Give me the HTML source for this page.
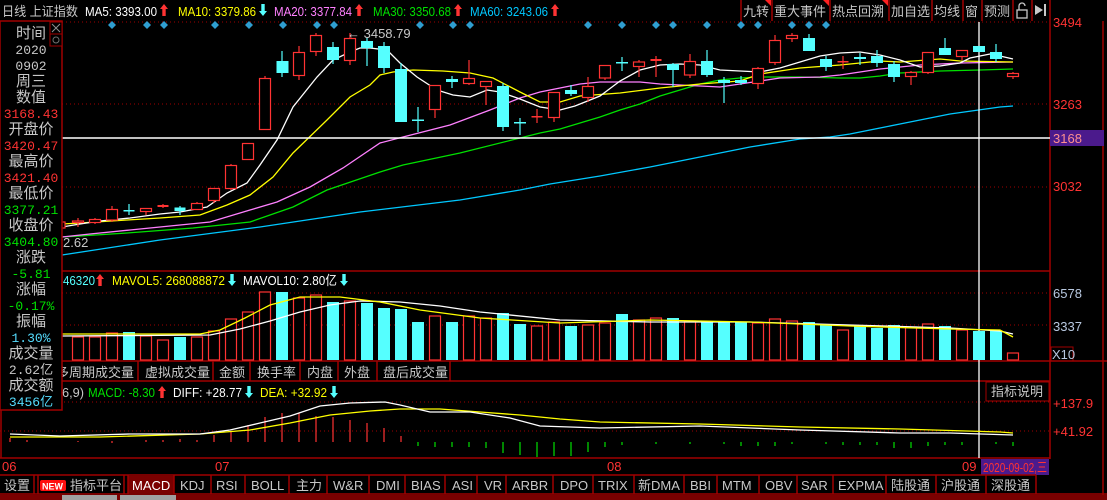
<!DOCTYPE html>
<html><head><meta charset="utf-8"><style>
html,body{margin:0;padding:0;background:#000;}
body{width:1107px;height:500px;overflow:hidden;position:relative;}
svg{position:absolute;left:0;top:0;}
text{font-family:"Liberation Sans","Noto Sans CJK SC",sans-serif;}
.mono{font-family:"Liberation Mono","Noto Sans CJK SC",monospace;}
.r{fill:#000;stroke:#ff3333;stroke-width:1.2}
.rw{stroke:#ff3333;stroke-width:1.2}
.c{fill:#55ffff}
.cw{stroke:#55ffff;stroke-width:1.2}
.dot{stroke:#a00000;stroke-dasharray:1 3;stroke-width:1}
.bd{stroke:#a00000;stroke-width:1.5;fill:none}
.tab{fill:#c8c8c8;font-size:13px}
</style></head><body>
<svg width="1107" height="500" viewBox="0 0 1107 500" xmlns="http://www.w3.org/2000/svg">
<defs>
<path id="au" d="M0 -6 l4 5 h-2.3 v7 h-3.4 v-7 h-2.3z"/>
<path id="ad" d="M0 6 l4 -5 h-2.3 v-7 h-3.4 v7 h-2.3z"/>
</defs>
<!-- top bar -->
<text x="2" y="16" fill="#c8c8c8" font-size="13" textLength="76" lengthAdjust="spacingAndGlyphs">日线 上证指数</text>
<text x="85" y="16" fill="#ffffff" font-size="13" textLength="72" lengthAdjust="spacingAndGlyphs">MA5: 3393.00</text><use href="#au" x="164" y="10" fill="#ff3333"/>
<text x="178" y="16" fill="#ffff00" font-size="13" textLength="78" lengthAdjust="spacingAndGlyphs">MA10: 3379.86</text><use href="#ad" x="263" y="10" fill="#55ffff"/>
<text x="274" y="16" fill="#ff80ff" font-size="13" textLength="78" lengthAdjust="spacingAndGlyphs">MA20: 3377.84</text><use href="#au" x="359" y="10" fill="#ff3333"/>
<text x="373" y="16" fill="#00e000" font-size="13" textLength="78" lengthAdjust="spacingAndGlyphs">MA30: 3350.68</text><use href="#au" x="458" y="10" fill="#ff3333"/>
<text x="470" y="16" fill="#00c8ff" font-size="13" textLength="78" lengthAdjust="spacingAndGlyphs">MA60: 3243.06</text><use href="#au" x="555" y="10" fill="#ff3333"/>
<!-- right buttons -->
<g class="bd"><line x1="741" y1="0" x2="741" y2="21"/><line x1="772" y1="0" x2="772" y2="21"/><line x1="830" y1="0" x2="830" y2="21"/><line x1="889" y1="0" x2="889" y2="21"/><line x1="932" y1="0" x2="932" y2="21"/><line x1="963" y1="0" x2="963" y2="21"/><line x1="982" y1="0" x2="982" y2="21"/><line x1="1013" y1="0" x2="1013" y2="21"/><line x1="1032" y1="0" x2="1032" y2="21"/><line x1="1050" y1="0" x2="1050" y2="21"/></g>
<g fill="#c8c8c8" font-size="13"><text x="743" y="16">九转</text><text x="774" y="16">重大事件</text><text x="832" y="16">热点回溯</text><text x="891" y="16">加自选</text><text x="934" y="16">均线</text><text x="965" y="16">窗</text><text x="984" y="16">预测</text></g>
<g fill="#ff2020"><polygon points="765,0 771,0 771,6"/><polygon points="823,0 829,0 829,6"/><polygon points="882,0 888,0 888,6"/></g>
<rect x="1017" y="10" width="10" height="8" fill="none" stroke="#c8c8c8" stroke-width="1.3"/><path d="M1019 10 V6 a3 3 0 0 1 6 0" fill="none" stroke="#c8c8c8" stroke-width="1.3"/>
<polygon points="1035,5 1043,10 1035,15" fill="#c8c8c8"/><rect x="1035" y="9" width="4" height="2" fill="#c8c8c8"/><rect x="1044" y="4" width="2" height="12" fill="#c8c8c8"/>
<!-- grid -->
<line x1="62" y1="22" x2="1050" y2="22" class="dot"/>
<line x1="62" y1="104" x2="1050" y2="104" class="dot"/>
<line x1="62" y1="187" x2="1050" y2="187" class="dot"/>
<line x1="62" y1="293" x2="1050" y2="293" class="dot"/>
<line x1="62" y1="325" x2="1050" y2="325" class="dot"/>
<line x1="0" y1="402" x2="1050" y2="402" class="dot"/>
<line x1="0" y1="431" x2="1050" y2="431" class="dot"/>
<g class="bd">
<line x1="1050" y1="21" x2="1050" y2="459"/><line x1="1103" y1="21" x2="1103" y2="500"/>
<line x1="0" y1="271" x2="1050" y2="271"/>
<line x1="62" y1="361" x2="1107" y2="361"/>
<line x1="0" y1="381" x2="1050" y2="381"/>
<line x1="0" y1="458" x2="1050" y2="458"/>
<line x1="1" y1="381" x2="1" y2="458"/>
</g>
<!-- diamonds -->
<g fill="#2f9ed0">
<path d="M112 21l4 4-4 4-4-4z"/><path d="M147 21l4 4-4 4-4-4z"/><path d="M164 21l4 4-4 4-4-4z"/><path d="M215 21l4 4-4 4-4-4z"/><path d="M249 21l4 4-4 4-4-4z"/><path d="M283 21l4 4-4 4-4-4z"/><path d="M317 21l4 4-4 4-4-4z"/><path d="M334 21l4 4-4 4-4-4z"/><path d="M420 21l4 4-4 4-4-4z"/><path d="M453 21l4 4-4 4-4-4z"/><path d="M470 21l4 4-4 4-4-4z"/>
<path d="M588 21l4 4-4 4-4-4z"/><path d="M622 21l4 4-4 4-4-4z"/><path d="M656 21l4 4-4 4-4-4z"/><path d="M673 21l4 4-4 4-4-4z"/><path d="M707 21l4 4-4 4-4-4z"/><path d="M741 21l4 4-4 4-4-4z"/><path d="M758 21l4 4-4 4-4-4z"/><path d="M792 21l4 4-4 4-4-4z"/><path d="M809 21l4 4-4 4-4-4z"/><path d="M826 21l4 4-4 4-4-4z"/>
</g>
<!-- MA lines -->
<g fill="none" stroke-width="1.3">
<polyline stroke="#00c8ff" points="62,255 160,240 260,227 360,212 460,200 520,190 550,184 600,176 650,167 700,157 750,147 800,139 830,137 850,134 900,124 950,114 1000,107 1013,106"/>
<polyline stroke="#00e000" points="62,237 80,236 127,233 193,228 250,222 293,207 327,190 380,172 403,165 460,153 520,138 540,133 560,129 580,123 600,117 620,110 640,104 660,96 680,90 700,84 720,80 740,78 760,77 800,77 840,78 860,78 880,76 900,73 940,71 980,70 1013,69"/>
<polyline stroke="#ff80ff" points="62,237 90,234 130,230 170,226 210,222 250,210 277,202 310,187 343,168 380,143 403,137 450,125 490,110 520,98 540,92 560,88 580,84 600,82 640,82 660,84 700,86 720,87 740,84 760,81 780,78 820,77 840,75 860,72 880,69 900,67 920,65 960,63 1013,62"/>
<polyline stroke="#ffff00" points="62,224 80,223 127,220 160,218 200,215 227,205 250,195 273,177 293,153 327,120 350,97 370,85 380,75 393,72 413,70 443,71 470,73 493,78 520,92 540,102 560,102 580,96 620,93 660,88 700,84 740,81 760,74 780,71 800,68 840,65 880,61 900,62 940,59 960,61 1013,62"/>
<polyline stroke="#ffffff" points="62,227 80,224 100,221 130,218 160,214 180,212 207,207 227,193 247,183 260,165 277,140 293,107 317,77 333,60 350,52 360,48 370,48 387,50 400,63 417,77 437,90 453,95 470,97 487,90 500,92 520,99 540,107 560,110 575,106 600,96 620,81 640,70 660,65 680,64 700,65 720,70 760,72 780,68 800,62 820,56 840,53 860,52 880,55 900,60 920,67 940,66 960,63 970,58 990,54 1000,56 1013,59"/>
</g>
<line x1="62" y1="138" x2="1050" y2="138" stroke="#ffffff" stroke-width="1.5"/>
<line x1="979" y1="22" x2="979" y2="458" stroke="#ffffff" stroke-width="1.3"/>
<!-- candles -->
<g>
<line class="rw" x1="61" y1="219" x2="61" y2="230"/><rect class="r" x="57" y="222" width="8" height="6"/>
<line class="rw" x1="78" y1="218" x2="78" y2="227"/><rect class="r" x="72.5" y="221" width="11" height="1.5"/>
<line class="rw" x1="95" y1="218" x2="95" y2="224"/><rect class="r" x="89.5" y="219.5" width="11" height="3"/>
<line class="rw" x1="112" y1="206" x2="112" y2="222"/><rect class="r" x="106.5" y="209.5" width="11" height="10.5"/>
<line class="cw" x1="129" y1="204" x2="129" y2="215"/><rect class="c" x="123.5" y="210" width="11" height="1.5"/>
<line class="rw" x1="146" y1="208" x2="146" y2="215"/><rect class="r" x="140.5" y="208.5" width="11" height="3"/>
<line class="rw" x1="163" y1="204" x2="163" y2="208"/><rect x="157.5" y="205" width="11" height="2" fill="#ff3333"/>
<line class="cw" x1="180" y1="206" x2="180" y2="215"/><rect class="c" x="174.5" y="207.5" width="11" height="3.5"/>
<line class="rw" x1="197" y1="202" x2="197" y2="210"/><rect class="r" x="191.5" y="203.5" width="11" height="6"/>
<line class="rw" x1="214" y1="188" x2="214" y2="203"/><rect class="r" x="208.5" y="188.5" width="11" height="12"/>
<line class="rw" x1="231" y1="164" x2="231" y2="190"/><rect class="r" x="225.5" y="165.5" width="11" height="23"/>
<rect class="r" x="242.5" y="143.5" width="11" height="16"/>
<line class="rw" x1="265" y1="76" x2="265" y2="130"/><rect class="r" x="259.5" y="78.5" width="11" height="51"/>
<line class="cw" x1="282" y1="51" x2="282" y2="77"/><rect class="c" x="276.5" y="61" width="12" height="12"/>
<line class="rw" x1="299" y1="46" x2="299" y2="80"/><rect class="r" x="293.5" y="52.5" width="11" height="23"/>
<line class="rw" x1="316" y1="33" x2="316" y2="56"/><rect class="r" x="310.5" y="35.5" width="11" height="16"/>
<line class="cw" x1="333" y1="42" x2="333" y2="64"/><rect class="c" x="327" y="47" width="12" height="13"/>
<line class="rw" x1="350" y1="33" x2="350" y2="65"/><rect class="r" x="344.5" y="38.5" width="11" height="22"/>
<line class="cw" x1="367" y1="38" x2="367" y2="66"/><rect class="c" x="361" y="41" width="12" height="7"/>
<line class="cw" x1="384" y1="42" x2="384" y2="73"/><rect class="c" x="378" y="46" width="12" height="22"/>
<line class="cw" x1="401" y1="63" x2="401" y2="122"/><rect class="c" x="395" y="69" width="12" height="53"/>
<line class="cw" x1="418" y1="107" x2="418" y2="132"/><rect class="c" x="412" y="119.5" width="12" height="1.5"/>
<line class="rw" x1="435" y1="85" x2="435" y2="118"/><rect class="r" x="429.5" y="85.5" width="11" height="24"/>
<line class="cw" x1="452" y1="76" x2="452" y2="88"/><rect class="c" x="446" y="79" width="12" height="3"/>
<line class="rw" x1="469" y1="60" x2="469" y2="85"/><rect class="r" x="463.5" y="78.5" width="11" height="5"/>
<line class="rw" x1="486" y1="81" x2="486" y2="105"/><rect class="r" x="480.5" y="81.5" width="11" height="5"/>
<line class="cw" x1="503" y1="83" x2="503" y2="131"/><rect class="c" x="497" y="86" width="12" height="41"/>
<line class="cw" x1="520" y1="118" x2="520" y2="135"/><rect class="c" x="514" y="122" width="12" height="1.5"/>
<line class="rw" x1="537" y1="109" x2="537" y2="123"/><rect x="531.5" y="116" width="11" height="1.5" fill="#ff3333"/>
<line class="rw" x1="554" y1="92" x2="554" y2="122"/><rect class="r" x="548.5" y="92.5" width="11" height="25"/>
<line class="cw" x1="571" y1="85" x2="571" y2="96"/><rect class="c" x="565" y="90" width="12" height="4"/>
<line class="rw" x1="588" y1="77" x2="588" y2="102"/><rect class="r" x="582.5" y="86.5" width="11" height="11"/>
<line class="rw" x1="605" y1="65" x2="605" y2="80"/><rect class="r" x="599.5" y="65.5" width="11" height="12.5"/>
<line class="cw" x1="622" y1="57" x2="622" y2="71"/><rect class="c" x="616" y="62" width="12" height="1.5"/>
<line class="rw" x1="639" y1="60" x2="639" y2="77"/><rect class="r" x="633.5" y="62" width="11" height="4.5"/>
<line class="rw" x1="656" y1="56" x2="656" y2="77"/><rect x="650.5" y="59" width="11" height="2" fill="#ff3333"/>
<line class="cw" x1="673" y1="63" x2="673" y2="87"/><rect class="c" x="667" y="64" width="12" height="6"/>
<line class="rw" x1="690" y1="54" x2="690" y2="78"/><rect class="r" x="684.5" y="61.5" width="11" height="13.5"/>
<line class="cw" x1="707" y1="50" x2="707" y2="77"/><rect class="c" x="701" y="61" width="12" height="14"/>
<line class="cw" x1="724" y1="77" x2="724" y2="103"/><rect class="c" x="718" y="80" width="12" height="3"/>
<line class="cw" x1="741" y1="76" x2="741" y2="85"/><rect class="c" x="735" y="80" width="12" height="3"/>
<line class="rw" x1="758" y1="67" x2="758" y2="89"/><rect class="r" x="752.5" y="68.5" width="11" height="15"/>
<line class="rw" x1="775" y1="35" x2="775" y2="65"/><rect class="r" x="769.5" y="40.5" width="11" height="22"/>
<line class="rw" x1="792" y1="33" x2="792" y2="42"/><rect class="r" x="786.5" y="35.5" width="11" height="3"/>
<line class="cw" x1="809" y1="34" x2="809" y2="51"/><rect class="c" x="803" y="38" width="12" height="13"/>
<line class="cw" x1="826" y1="56" x2="826" y2="71"/><rect class="c" x="820" y="59" width="12" height="8"/>
<line class="rw" x1="843" y1="56" x2="843" y2="69"/><rect x="837.5" y="61" width="11" height="1.5" fill="#ff3333"/>
<line class="cw" x1="860" y1="53" x2="860" y2="65"/><rect class="c" x="854" y="57" width="12" height="2"/>
<line class="cw" x1="877" y1="50" x2="877" y2="67"/><rect class="c" x="871" y="56" width="12" height="7"/>
<line class="cw" x1="894" y1="61" x2="894" y2="82"/><rect class="c" x="888" y="64" width="12" height="13"/>
<line class="rw" x1="911" y1="71" x2="911" y2="85"/><rect class="r" x="905.5" y="72.5" width="11" height="4"/>
<line class="rw" x1="928" y1="52" x2="928" y2="74"/><rect class="r" x="922.5" y="52.5" width="11" height="20"/>
<line class="cw" x1="945" y1="38" x2="945" y2="55"/><rect class="c" x="939" y="48" width="12" height="7"/>
<line class="rw" x1="962" y1="50" x2="962" y2="60"/><rect class="r" x="956.5" y="50.5" width="11" height="6"/>
<rect class="c" x="973" y="46" width="12" height="6"/>
<line class="cw" x1="996" y1="44" x2="996" y2="62"/><rect class="c" x="990" y="52" width="12" height="7"/>
<line class="rw" x1="1013" y1="72" x2="1013" y2="79"/><rect class="r" x="1007.5" y="73.5" width="11" height="3"/>
</g>
<text x="347" y="38" fill="#c8c8c8" font-size="13">← 3458.79</text>
<text x="63" y="247" fill="#c8c8c8" font-size="13">2.62</text>
<g font-size="13" fill="#ff3333"><text x="1053" y="27">3494</text><text x="1053" y="109">3263</text><text x="1053" y="191">3032</text></g>
<rect x="1050" y="130" width="54" height="16" fill="#4b1a8c"/>
<text x="1053" y="143" fill="#ff9090" font-size="13">3168</text>
<!-- volume -->
<text x="63" y="285" fill="#55ffff" font-size="13" textLength="32" lengthAdjust="spacingAndGlyphs">46320</text><use href="#au" x="100" y="280" fill="#ff3333"/>
<text x="112" y="285" fill="#ffff00" font-size="13" textLength="113" lengthAdjust="spacingAndGlyphs">MAVOL5: 268088872</text><use href="#ad" x="232" y="280" fill="#55ffff"/>
<text x="243" y="285" fill="#ffffff" font-size="13" textLength="94" lengthAdjust="spacingAndGlyphs">MAVOL10: 2.80亿</text><use href="#ad" x="344" y="280" fill="#55ffff"/>
<g>
<rect class="r" x="72.5" y="337" width="11" height="23"/><rect class="r" x="89.5" y="337" width="11" height="23"/><rect class="r" x="106.5" y="333" width="11" height="27"/>
<rect class="c" x="123" y="332" width="12" height="28"/><rect class="r" x="140.5" y="336" width="11" height="24"/><rect class="r" x="157.5" y="340" width="11" height="20"/>
<rect class="c" x="174" y="337" width="12" height="23"/><rect class="r" x="191.5" y="337" width="11" height="23"/><rect class="r" x="208.5" y="331" width="11" height="29"/>
<rect class="r" x="225.5" y="319" width="11" height="41"/><rect class="r" x="242.5" y="312" width="11" height="48"/><rect class="r" x="259.5" y="292" width="11" height="68"/>
<rect class="c" x="276" y="292" width="12" height="68"/><rect class="r" x="293.5" y="298" width="11" height="62"/><rect class="r" x="310.5" y="295" width="11" height="65"/>
<rect class="c" x="327" y="302" width="12" height="58"/><rect class="r" x="344.5" y="301" width="11" height="59"/><rect class="c" x="361" y="303" width="12" height="57"/>
<rect class="c" x="378" y="308" width="12" height="52"/><rect class="c" x="395" y="309" width="12" height="51"/><rect class="c" x="412" y="322" width="12" height="38"/>
<rect class="r" x="429.5" y="316" width="11" height="44"/><rect class="c" x="446" y="322" width="12" height="38"/><rect class="r" x="463.5" y="316" width="11" height="44"/>
<rect class="r" x="480.5" y="318" width="11" height="42"/><rect class="c" x="497" y="313" width="12" height="47"/><rect class="c" x="514" y="324" width="12" height="36"/>
<rect class="r" x="531.5" y="326" width="11" height="34"/><rect class="r" x="548.5" y="322" width="11" height="38"/><rect class="c" x="565" y="326" width="12" height="34"/>
<rect class="r" x="582.5" y="325" width="11" height="35"/><rect class="r" x="599.5" y="323" width="11" height="37"/><rect class="c" x="616" y="314" width="12" height="46"/>
<rect class="r" x="633.5" y="320" width="11" height="40"/><rect class="r" x="650.5" y="318" width="11" height="42"/><rect class="c" x="667" y="318" width="12" height="42"/>
<rect class="r" x="684.5" y="321" width="11" height="39"/><rect class="c" x="701" y="321" width="12" height="39"/><rect class="c" x="718" y="322" width="12" height="38"/>
<rect class="c" x="735" y="322" width="12" height="38"/><rect class="r" x="752.5" y="323" width="11" height="37"/><rect class="r" x="769.5" y="319" width="11" height="41"/>
<rect class="r" x="786.5" y="321" width="11" height="39"/><rect class="c" x="803" y="322" width="12" height="38"/><rect class="c" x="820" y="325" width="12" height="35"/>
<rect class="r" x="837.5" y="330" width="11" height="30"/><rect class="c" x="854" y="325" width="12" height="35"/><rect class="c" x="871" y="328" width="12" height="32"/>
<rect class="c" x="888" y="325" width="12" height="35"/><rect class="r" x="905.5" y="327" width="11" height="33"/><rect class="r" x="922.5" y="324" width="11" height="36"/>
<rect class="c" x="939" y="326" width="12" height="34"/><rect class="r" x="956.5" y="330" width="11" height="30"/><rect class="c" x="973" y="331" width="12" height="29"/>
<rect class="c" x="990" y="331" width="12" height="29"/><rect class="r" x="1007.5" y="353" width="11" height="7"/>
</g>
<g fill="none" stroke-width="1.3">
<polyline stroke="#ffffff" points="62,336 210,335 240,329 270,321 300,312 330,305 360,301 400,302 440,306 480,312 560,320 650,322 750,322 850,325 950,328 1000,331 1013,334"/>
<polyline stroke="#ffff00" points="62,334 200,334 220,330 245,318 270,305 300,297 340,297 380,302 420,310 480,318 560,323 650,320 750,322 850,326 950,329 1000,330 1013,337"/>
</g>
<g font-size="13" fill="#b8c8e0"><text x="1053" y="298">6578</text><text x="1053" y="331">3337</text></g>
<rect x="1051" y="347" width="22" height="14" fill="none" stroke="#a00000"/><text x="1052" y="359" fill="#b8c8e0" font-size="13">X10</text>
<g class="bd"><line x1="138" y1="361" x2="138" y2="381"/><line x1="213" y1="361" x2="213" y2="381"/><line x1="250" y1="361" x2="250" y2="381"/><line x1="300" y1="361" x2="300" y2="381"/><line x1="338" y1="361" x2="338" y2="381"/><line x1="377" y1="361" x2="377" y2="381"/><line x1="450" y1="361" x2="450" y2="381"/></g>
<g class="tab"><text x="56" y="377">多周期成交量</text><text x="145" y="377">虚拟成交量</text><text x="219" y="377">金额</text><text x="257" y="377">换手率</text><text x="307" y="377">内盘</text><text x="344" y="377">外盘</text><text x="383" y="377">盘后成交量</text></g>
<!-- MACD -->
<text x="62" y="397" fill="#c8c8c8" font-size="13" textLength="22" lengthAdjust="spacingAndGlyphs">6,9)</text>
<text x="88" y="397" fill="#00e000" font-size="13" textLength="67" lengthAdjust="spacingAndGlyphs">MACD: -8.30</text><use href="#au" x="162" y="392" fill="#ff3333"/>
<text x="173" y="397" fill="#ffffff" font-size="13" textLength="69" lengthAdjust="spacingAndGlyphs">DIFF: +28.77</text><use href="#ad" x="249" y="392" fill="#55ffff"/>
<text x="260" y="397" fill="#ffff00" font-size="13" textLength="67" lengthAdjust="spacingAndGlyphs">DEA: +32.92</text><use href="#ad" x="334" y="392" fill="#55ffff"/>
<rect x="986" y="382" width="63" height="19" fill="#000" stroke="#a00000"/>
<text x="991" y="396" fill="#c8c8c8" font-size="13">指标说明</text>
<g font-size="13" fill="#ff3333"><text x="1053" y="408">+137.9</text><text x="1053" y="436">+41.92</text></g>
<g stroke="#ff3333" stroke-width="1.2">
<line x1="10" y1="438" x2="10" y2="442"/><line x1="27" y1="440" x2="27" y2="442"/><line x1="78" y1="441" x2="78" y2="442"/><line x1="112" y1="441" x2="112" y2="443"/><line x1="146" y1="440" x2="146" y2="442"/><line x1="163" y1="440" x2="163" y2="442"/><line x1="180" y1="439" x2="180" y2="442"/><line x1="197" y1="440" x2="197" y2="442"/>
<line x1="214" y1="435" x2="214" y2="442"/><line x1="231" y1="432" x2="231" y2="442"/><line x1="248" y1="425" x2="248" y2="442"/><line x1="265" y1="417" x2="265" y2="442"/><line x1="282" y1="413" x2="282" y2="442"/><line x1="299" y1="413" x2="299" y2="442"/><line x1="316" y1="416" x2="316" y2="442"/><line x1="333" y1="417" x2="333" y2="442"/><line x1="350" y1="420" x2="350" y2="442"/><line x1="367" y1="423" x2="367" y2="442"/><line x1="384" y1="428" x2="384" y2="442"/><line x1="401" y1="436" x2="401" y2="442"/>
</g>
<g stroke="#00e000" stroke-width="1.2">
<line x1="418" y1="442" x2="418" y2="446"/><line x1="435" y1="442" x2="435" y2="447"/><line x1="452" y1="442" x2="452" y2="447"/><line x1="469" y1="442" x2="469" y2="447"/><line x1="486" y1="442" x2="486" y2="448"/><line x1="503" y1="442" x2="503" y2="453"/><line x1="520" y1="442" x2="520" y2="455"/><line x1="537" y1="442" x2="537" y2="457"/><line x1="554" y1="442" x2="554" y2="456"/><line x1="571" y1="442" x2="571" y2="456"/><line x1="588" y1="442" x2="588" y2="452"/><line x1="605" y1="442" x2="605" y2="447"/><line x1="622" y1="442" x2="622" y2="445"/><line x1="656" y1="442" x2="656" y2="444"/><line x1="690" y1="442" x2="690" y2="444"/><line x1="724" y1="442" x2="724" y2="444"/><line x1="741" y1="442" x2="741" y2="446"/><line x1="758" y1="442" x2="758" y2="446"/><line x1="775" y1="442" x2="775" y2="446"/><line x1="792" y1="442" x2="792" y2="444"/><line x1="826" y1="442" x2="826" y2="444"/><line x1="843" y1="442" x2="843" y2="445"/><line x1="860" y1="442" x2="860" y2="445"/><line x1="877" y1="442" x2="877" y2="445"/><line x1="894" y1="442" x2="894" y2="448"/><line x1="911" y1="442" x2="911" y2="448"/><line x1="928" y1="442" x2="928" y2="446"/><line x1="945" y1="442" x2="945" y2="445"/><line x1="962" y1="442" x2="962" y2="445"/><line x1="996" y1="442" x2="996" y2="444"/><line x1="1013" y1="442" x2="1013" y2="446"/>
</g>
<g fill="none" stroke-width="1.3">
<polyline stroke="#ffff00" points="10,437 100,437 200,434 250,430 290,423 330,415 370,411 400,409 440,409 480,412 520,415 560,419 600,422 700,424 800,427 900,429 1000,432 1013,433"/>
<polyline stroke="#ffffff" points="10,434 60,436 130,434 200,434 230,430 260,423 290,416 320,406 350,403 385,402 400,405 430,412 470,412 510,418 540,426 600,428 700,426 800,430 900,433 950,433 1013,435"/>
</g>
<!-- date axis -->
<g font-size="13" fill="#ff3333"><text x="2" y="471">06</text><text x="215" y="471">07</text><text x="607" y="471">08</text><text x="962" y="471">09</text></g>
<rect x="981" y="459" width="68" height="16" fill="#4b1a8c"/>
<text x="983" y="472" fill="#ff3333" font-size="13" textLength="64" lengthAdjust="spacingAndGlyphs">2020-09-02,三</text>
<!-- bottom tabs -->
<rect x="0" y="475" width="1050" height="19" fill="#000"/>
<rect x="128" y="476" width="46" height="17" fill="#7a0000"/>
<g class="bd">
<line x1="0" y1="475" x2="1036" y2="475"/><line x1="0" y1="494" x2="1107" y2="494"/>
<line x1="34" y1="475" x2="34" y2="494"/><line x1="38" y1="475" x2="38" y2="494"/><line x1="124" y1="475" x2="124" y2="494"/><line x1="128" y1="475" x2="128" y2="494"/><line x1="174" y1="475" x2="174" y2="494"/><line x1="211" y1="475" x2="211" y2="494"/><line x1="245" y1="475" x2="245" y2="494"/><line x1="289" y1="475" x2="289" y2="494"/><line x1="327" y1="475" x2="327" y2="494"/><line x1="369" y1="475" x2="369" y2="494"/><line x1="405" y1="475" x2="405" y2="494"/><line x1="445" y1="475" x2="445" y2="494"/><line x1="477" y1="475" x2="477" y2="494"/><line x1="506" y1="475" x2="506" y2="494"/><line x1="553" y1="475" x2="553" y2="494"/><line x1="593" y1="475" x2="593" y2="494"/><line x1="634" y1="475" x2="634" y2="494"/><line x1="684" y1="475" x2="684" y2="494"/><line x1="717" y1="475" x2="717" y2="494"/><line x1="759" y1="475" x2="759" y2="494"/><line x1="797" y1="475" x2="797" y2="494"/><line x1="833" y1="475" x2="833" y2="494"/><line x1="886" y1="475" x2="886" y2="494"/><line x1="936" y1="475" x2="936" y2="494"/><line x1="986" y1="475" x2="986" y2="494"/><line x1="1036" y1="475" x2="1036" y2="494"/>
</g>
<rect x="40" y="480" width="26" height="11" rx="2" fill="#ff1010"/>
<text x="42" y="489.5" fill="#fff" font-size="9" font-weight="bold">NEW</text>
<g class="tab">
<text x="4" y="490">设置</text><text x="70" y="490">指标平台</text><text x="132" y="490" fill="#ffffff">MACD</text><text x="180" y="490">KDJ</text><text x="216" y="490">RSI</text><text x="251" y="490">BOLL</text><text x="296" y="490">主力</text><text x="333" y="490">W&amp;R</text><text x="376" y="490">DMI</text><text x="411" y="490">BIAS</text><text x="452" y="490">ASI</text><text x="484" y="490">VR</text><text x="512" y="490">ARBR</text><text x="560" y="490">DPO</text><text x="598" y="490">TRIX</text><text x="638" y="490">新DMA</text><text x="690" y="490">BBI</text><text x="722" y="490">MTM</text><text x="765" y="490">OBV</text><text x="801" y="490">SAR</text><text x="838" y="490">EXPMA</text><text x="891" y="490">陆股通</text><text x="941" y="490">沪股通</text><text x="991" y="490">深股通</text>
</g>
<rect x="0" y="495" width="1107" height="5" fill="#7a0000"/>
<rect x="62" y="495" width="55" height="5" fill="#a0a0a0"/><rect x="120" y="495" width="56" height="5" fill="#a0a0a0"/>
<!-- left info panel -->
<rect x="0" y="21" width="62" height="389" fill="#000" stroke="#a00000" stroke-width="1.5"/>
<rect x="50" y="22" width="12" height="12" fill="#000" stroke="#a00000"/><path d="M52 24l8 8M60 24l-8 8" stroke="#909090"/>
<rect x="50" y="34" width="12" height="12" fill="#000" stroke="#a00000"/><circle cx="56" cy="40" r="3" fill="none" stroke="#707070"/>
<g text-anchor="middle" font-size="15">
<text x="31" y="38" fill="#c8c8c8">时间</text>
<text x="31" y="54" fill="#c8c8c8" class="mono" font-size="13">2020</text>
<text x="31" y="70" fill="#c8c8c8" class="mono" font-size="13">0902</text>
<text x="31" y="86" fill="#c8c8c8">周三</text>
<text x="31" y="102" fill="#c8c8c8">数值</text>
<text x="31" y="118" fill="#ff3333" class="mono" font-size="13">3168.43</text>
<text x="31" y="134" fill="#c8c8c8">开盘价</text>
<text x="31" y="150" fill="#ff3333" class="mono" font-size="13">3420.47</text>
<text x="31" y="166" fill="#c8c8c8">最高价</text>
<text x="31" y="182" fill="#ff3333" class="mono" font-size="13">3421.40</text>
<text x="31" y="198" fill="#c8c8c8">最低价</text>
<text x="31" y="214" fill="#00e000" class="mono" font-size="13">3377.21</text>
<text x="31" y="230" fill="#c8c8c8">收盘价</text>
<text x="31" y="246" fill="#00e000" class="mono" font-size="13">3404.80</text>
<text x="31" y="262" fill="#c8c8c8">涨跌</text>
<text x="31" y="278" fill="#00e000" class="mono" font-size="13">-5.81</text>
<text x="31" y="294" fill="#c8c8c8">涨幅</text>
<text x="31" y="310" fill="#00e000" class="mono" font-size="13">-0.17%</text>
<text x="31" y="326" fill="#c8c8c8">振幅</text>
<text x="31" y="342" fill="#55ddff" class="mono" font-size="13">1.30%</text>
<text x="31" y="358" fill="#c8c8c8">成交量</text>
<text x="31" y="374" fill="#c8c8c8" class="mono" font-size="13">2.62亿</text>
<text x="31" y="390" fill="#c8c8c8">成交额</text>
<text x="31" y="406" fill="#55ddff" class="mono" font-size="13">3456亿</text>
</g>
</svg>
</body></html>
